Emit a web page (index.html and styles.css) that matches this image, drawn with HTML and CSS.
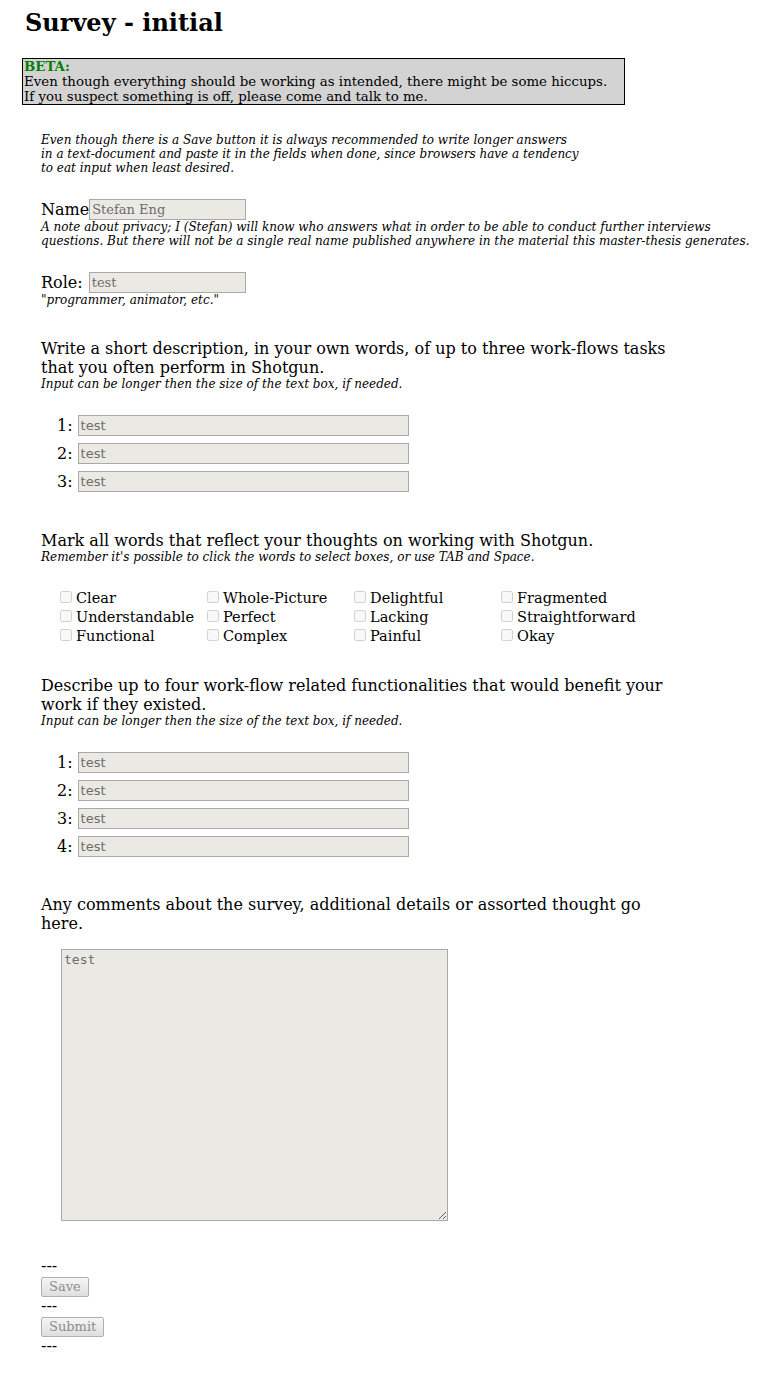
FILE: index.html
```html
<!DOCTYPE html>
<html lang="en">
<head>
<meta charset="utf-8">
<title>Survey - initial</title>
<link rel="stylesheet" href="styles.css">
</head>
<body>
<h1 class="title">Survey - initial</h1>
<div class="beta"><strong class="beta-label">BETA:</strong><br>Even though everything should be working as intended, there might be some hiccups.<br>If you suspect something is off, please come and talk to me.</div>

<div class="content">
  <p class="tip">Even though there is a Save button it is always recommended to write longer answers in a text-document and paste it in the fields when done, since browsers have a tendency to eat input when least desired.</p>

  <div class="field field-name"><span class="label">Name</span><input class="text serif" type="text" value="Stefan Eng" disabled></div>
  <p class="note">A note about privacy; I (Stefan) will know who answers what in order to be able to conduct further interviews questions. But there will not be a single real name published anywhere in the material this master-thesis generates.</p>

  <div class="field field-role"><span class="label">Role:</span><input class="text serif" type="text" value="test" disabled></div>
  <p class="note">"programmer, animator, etc."</p>

  <h2 class="question q1">Write a short description, in your own words, of up to three work-flows tasks that you often perform in Shotgun.</h2>
  <p class="note">Input can be longer then the size of the text box, if needed.</p>
  <div class="list">
    <div class="item"><span class="num">1:</span><input class="text wide" type="text" value="test" disabled></div>
    <div class="item"><span class="num">2:</span><input class="text wide" type="text" value="test" disabled></div>
    <div class="item"><span class="num">3:</span><input class="text wide" type="text" value="test" disabled></div>
  </div>

  <h2 class="question q2">Mark all words that reflect your thoughts on working with Shotgun.</h2>
  <p class="note">Remember it's possible to click the words to select boxes, or use TAB and Space.</p>
  <div class="words">
    <label class="word"><input type="checkbox" disabled>Clear</label>
    <label class="word"><input type="checkbox" disabled>Whole-Picture</label>
    <label class="word"><input type="checkbox" disabled>Delightful</label>
    <label class="word"><input type="checkbox" disabled>Fragmented</label>
    <label class="word"><input type="checkbox" disabled>Understandable</label>
    <label class="word"><input type="checkbox" disabled>Perfect</label>
    <label class="word"><input type="checkbox" disabled>Lacking</label>
    <label class="word"><input type="checkbox" disabled>Straightforward</label>
    <label class="word"><input type="checkbox" disabled>Functional</label>
    <label class="word"><input type="checkbox" disabled>Complex</label>
    <label class="word"><input type="checkbox" disabled>Painful</label>
    <label class="word"><input type="checkbox" disabled>Okay</label>
  </div>

  <h2 class="question q3">Describe up to four work-flow related functionalities that would benefit your work if they existed.</h2>
  <p class="note">Input can be longer then the size of the text box, if needed.</p>
  <div class="list">
    <div class="item"><span class="num">1:</span><input class="text wide" type="text" value="test" disabled></div>
    <div class="item"><span class="num">2:</span><input class="text wide" type="text" value="test" disabled></div>
    <div class="item"><span class="num">3:</span><input class="text wide" type="text" value="test" disabled></div>
    <div class="item"><span class="num">4:</span><input class="text wide" type="text" value="test" disabled></div>
  </div>

  <h2 class="question q4">Any comments about the survey, additional details or assorted thought go here.</h2>
  <textarea class="comments" disabled>test</textarea>

  <div class="actions">
    <div class="sep">---</div>
    <div class="btn-row"><button class="btn" disabled>Save</button></div>
    <div class="sep">---</div>
    <div class="btn-row"><button class="btn" disabled>Submit</button></div>
    <div class="sep">---</div>
  </div>
</div>
</body>
</html>
```

FILE: styles.css
```css
html, body {
  margin: 0;
  padding: 0;
  background: #ffffff;
  color: #000000;
  font-family: "DejaVu Serif", serif;
  font-size: 16px;
}

.title {
  margin: 9px 0 0 25px;
  font-size: 24px;
  line-height: 28px;
  font-weight: bold;
}

.beta {
  margin: 21px 0 0 22px;
  width: 600px;
  padding: 0 0 0 1px;
  box-sizing: content-box;
  border: 1px solid #000;
  background: #d3d3d3;
  font-size: 13.33px;
  line-height: 15px;
}

.beta-label {
  color: #008000;
}

.content {
  padding: 0 0 60px 41px;
}

.tip {
  margin: 28px 0 0 0;
  width: 540px;
  font-size: 12px;
  line-height: 14px;
  font-style: italic;
}

.note {
  margin: 0;
  font-size: 12px;
  line-height: 14px;
  font-style: italic;
}

.field {
  display: flex;
  align-items: center;
  height: 20px;
  font-size: 16px;
}

.field-name {
  margin-top: 24px;
}

.field-role {
  margin-top: 24px;
}

.field-role .label {
  margin-right: 6px;
}

.field + .note {
  margin-top: 1px;
}

.text {
  box-sizing: border-box;
  height: 21px;
  margin: 0;
  padding: 0 2px;
  border: 1px solid #a9a9a9;
  border-radius: 0;
  background: #eae9e3;
  color: #6d6d6d;
  font-size: 13px;
  font-family: "DejaVu Sans", sans-serif;
}

.text.serif {
  width: 157px;
  font-family: "DejaVu Serif", serif;
}

.text.wide {
  width: 331px;
}

.question {
  margin: 32px 0 0 0;
  width: 635px;
  font-size: 16px;
  line-height: 19px;
  font-weight: normal;
}

.q2 {
  margin-top: 39px;
}

.q3 {
  margin-top: 30px;
}

.q4 {
  margin-top: 38px;
}

.list {
  display: flex;
  flex-direction: column;
  gap: 7px;
  margin-top: 24px;
  padding-left: 16px;
}

.item {
  display: flex;
  align-items: center;
  gap: 5px;
  font-size: 16px;
}

.words {
  display: grid;
  grid-template-columns: repeat(4, 147px);
  margin-top: 25px;
  padding-left: 19px;
  font-size: 14.5px;
  line-height: 19px;
}

.word {
  display: flex;
  align-items: center;
}

.word input {
  width: 12px;
  height: 12px;
  margin: 0 4px 3px 0;
}

.comments {
  display: block;
  box-sizing: border-box;
  width: 387px;
  height: 272px;
  margin: 16px 0 0 20px;
  padding: 2px;
  border: 1px solid #a9a9a9;
  background: #eae9e3;
  color: #6d6d6d;
  font-family: "DejaVu Sans Mono", monospace;
  font-size: 13px;
}

.actions {
  margin-top: 35px;
}

.sep {
  height: 20px;
  line-height: 20px;
  font-size: 16px;
}

.btn-row {
  height: 20px;
}

.btn {
  box-sizing: border-box;
  height: 20px;
  margin: 0;
  padding: 0 7px;
  border: 1px solid #b0b0b0;
  border-radius: 2px;
  background: linear-gradient(#f6f6f6, #dedede);
  color: #8c8c8c;
  font-family: "DejaVu Serif", serif;
  font-size: 13px;
  line-height: 18px;
}
```
